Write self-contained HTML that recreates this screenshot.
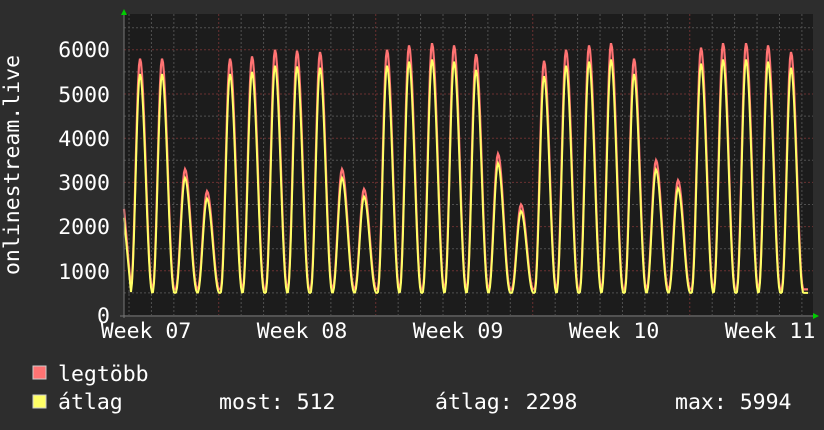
<!DOCTYPE html>
<html><head><meta charset="utf-8"><style>
html,body{margin:0;padding:0;background:#2d2d2d;width:824px;height:430px;overflow:hidden}
svg{display:block}
text{font-family:"DejaVu Sans Mono","Liberation Mono",monospace;font-size:21.5px;fill:#fff}
</style></head><body>
<svg id="s" width="824" height="430" xmlns="http://www.w3.org/2000/svg">
<rect x="0" y="0" width="824" height="430" fill="#2d2d2d"/>
<rect x="124" y="14" width="689" height="301" fill="#1c1c1c"/>
<g id="grid"></g>
<path id="pmax" fill="none" stroke="#ff7373" stroke-width="2.2"/>
<path id="pavg" fill="none" stroke="#ffff66" stroke-width="2"/>
<line x1="120" y1="316" x2="818" y2="316" stroke="#777" stroke-width="1"/>
<line x1="124" y1="12" x2="124" y2="318" stroke="#777" stroke-width="1"/>
<polygon points="121,15 127,15 124,9" fill="#00cc00"/>
<polygon points="813,313 813,319 819,316" fill="#00cc00"/>
<text x="110" y="57" text-anchor="end">6000</text>
<text x="110" y="102" text-anchor="end">5000</text>
<text x="110" y="146" text-anchor="end">4000</text>
<text x="110" y="190" text-anchor="end">3000</text>
<text x="110" y="234" text-anchor="end">2000</text>
<text x="110" y="279" text-anchor="end">1000</text>
<text x="110" y="323" text-anchor="end">0</text>
<text x="146" y="338" text-anchor="middle">Week 07</text>
<text x="302" y="338" text-anchor="middle">Week 08</text>
<text x="458" y="338" text-anchor="middle">Week 09</text>
<text x="614" y="338" text-anchor="middle">Week 10</text>
<text x="770" y="338" text-anchor="middle">Week 11</text>
<text transform="translate(19,165) rotate(-90)" text-anchor="middle">onlinestream.live</text>
<rect x="33" y="366" width="13" height="13" fill="#ff7373" stroke="#ccc" stroke-width="1"/>
<rect x="33" y="395" width="13" height="13" fill="#ffff66" stroke="#ccc" stroke-width="1"/>
<text x="58" y="381">legtöbb</text>
<text x="58" y="409">átlag</text>
<text x="219" y="409">most: 512</text>
<text x="435" y="409">átlag: 2298</text>
<text x="675" y="409">max: 5994</text>
</svg>
<script>
var ns="http://www.w3.org/2000/svg",g=document.getElementById('grid');
function ln(x1,y1,x2,y2,c){var l=document.createElementNS(ns,'line');l.setAttribute('x1',x1);l.setAttribute('y1',y1);l.setAttribute('x2',x2);l.setAttribute('y2',y2);l.setAttribute('stroke',c);l.setAttribute('stroke-width',1);l.setAttribute('stroke-dasharray','2,2');g.appendChild(l);}
var Y=function(v){return 315-v*0.0442;};
for(var v=500;v<=6500;v+=500){ln(124,Y(v),813,Y(v),v%1000==0?'#6a3030':'#505050');}
for(var x=129;x<813;x+=22.43){var wk=Math.abs(((x-219)/157)-Math.round((x-219)/157))<0.02;ln(x,14,x,315,wk?'#6a3030':'#505050');}
var P=[[140,5800],[162,5800],[185,3300],[207,2800],[230,5800],[252,5850],[275,6000],[297,5980],[320,5950],[342,3300],[364,2850],[387,6000],[409,6100],[432,6150],[454,6100],[476,5900],[498,3650],[521,2500],[544,5750],[566,6000],[589,6100],[611,6150],[634,5800],[656,3500],[678,3050],[701,6050],[723,6150],[746,6150],[768,6100],[791,5950]];
function val(x,sc,base){var v=base;for(var i=0;i<P.length;i++){var d=x-P[i][0];var hw=d<0?9.5:12.5;if(Math.abs(d)<hw){var f=Math.pow(Math.cos(Math.PI*d/(2*hw)),2.2);v=Math.max(v,base+(P[i][1]*sc-base)*f);}}
return v;}
var a='',b='';for(var x=124;x<=808;x+=1){var m=val(x,1,580),n=val(x,0.94,500);
if(x<=131){var t=(x-124)/7;m=Math.max(m,2400*(1-t)+580*t);n=Math.max(n,2200*(1-t)+500*t);}
a+=(x==124?'M':'L')+x+','+Y(m).toFixed(1);b+=(x==124?'M':'L')+x+','+Y(n).toFixed(1);}
document.getElementById('pmax').setAttribute('d',a);document.getElementById('pavg').setAttribute('d',b);
</script>
</body></html>
